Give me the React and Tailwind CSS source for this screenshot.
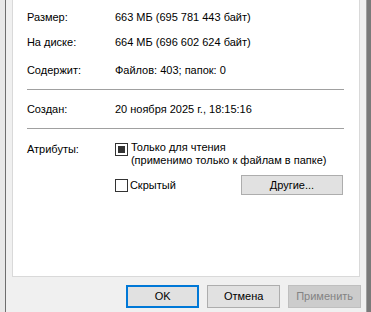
export default function App() {
  const rows = [
    ["Размер:", "663 МБ (695 781 443 байт)", "mt-[9px]"],
    ["На диске:", "664 МБ (696 602 624 байт)", "mt-[9px]"],
    ["Содержит:", "Файлов: 403; папок: 0", "mt-[12px]"],
  ];

  return (
    <div
      className="w-[371px] h-[312px] bg-[#f0f0f0] flex text-[11px] text-black overflow-hidden whitespace-nowrap"
      style={{ fontFamily: '"Liberation Sans", Arial, sans-serif' }}
    >
      {/* left window edge */}
      <div className="w-[5px] h-full bg-[#e8e8e8]" />
      <div className="w-[1px] h-full bg-[#6e6e6e]" />

      <div className="flex flex-col w-[361px]">
        {/* main panel */}
        <div className="ml-[6px] w-[348px] h-[277px] bg-white border border-t-0 border-[#d9d9d9] pl-[14px] pr-[15px] flex flex-col">
          {rows.map(([label, value, mt]) => (
            <div key={label} className={`flex h-[16px] leading-[16px] ${mt}`}>
              <div className="w-[88px]">{label}</div>
              <div>{value}</div>
            </div>
          ))}

          <div className="mt-[11px] h-[1px] bg-[#a0a0a0]" />

          <div className="flex h-[16px] leading-[16px] mt-[11px]">
            <div className="w-[88px]">Создан:</div>
            <div>20 ноября 2025 г., 18:15:16</div>
          </div>

          <div className="mt-[11px] h-[1px] bg-[#a0a0a0]" />

          <div className="flex mt-[12px]">
            <div className="w-[88px] leading-[16px]">Атрибуты:</div>
            <div className="flex flex-col">
              <div className="flex">
                <div className="mt-[2px] w-[13px] h-[13px] border border-[#333] flex items-center justify-center">
                  <div className="w-[7px] h-[7px] bg-[#333]" />
                </div>
                <div className="ml-[3px] leading-[13px]">
                  <div>Только для чтения</div>
                  <div>(применимо только к файлам в папке)</div>
                </div>
              </div>
              <div className="flex items-center mt-[8px]">
                <div className="w-[13px] h-[13px] border border-[#333]" />
                <div className="ml-[2px] w-[111px] leading-[16px]">Скрытый</div>
                <div className="w-[102px] h-[20px] bg-[#e1e1e1] border border-[#adadad] flex items-center justify-center">
                  Другие...
                </div>
              </div>
            </div>
          </div>
        </div>

        {/* bottom buttons */}
        <div className="flex justify-end gap-[8px] mt-[8px] pr-[1px]">
          <div className="w-[73px] h-[23px] bg-[#e1e1e1] border-2 border-[#0078d7] flex items-center justify-center">
            OK
          </div>
          <div className="w-[73px] h-[23px] bg-[#e1e1e1] border border-[#adadad] flex items-center justify-center">
            Отмена
          </div>
          <div className="w-[73px] h-[23px] bg-[#cccccc] border border-[#bfbfbf] text-[#838383] flex items-center justify-center">
            Применить
          </div>
        </div>
      </div>

      {/* right window edge */}
      <div className="w-[4px] h-full bg-[#f0f0f0]" />
      <div className="w-[1px] h-full bg-[#a0a0a0]" />
      <div className="w-[4px] h-full bg-[#7a7a7a]" />
    </div>
  );
}
